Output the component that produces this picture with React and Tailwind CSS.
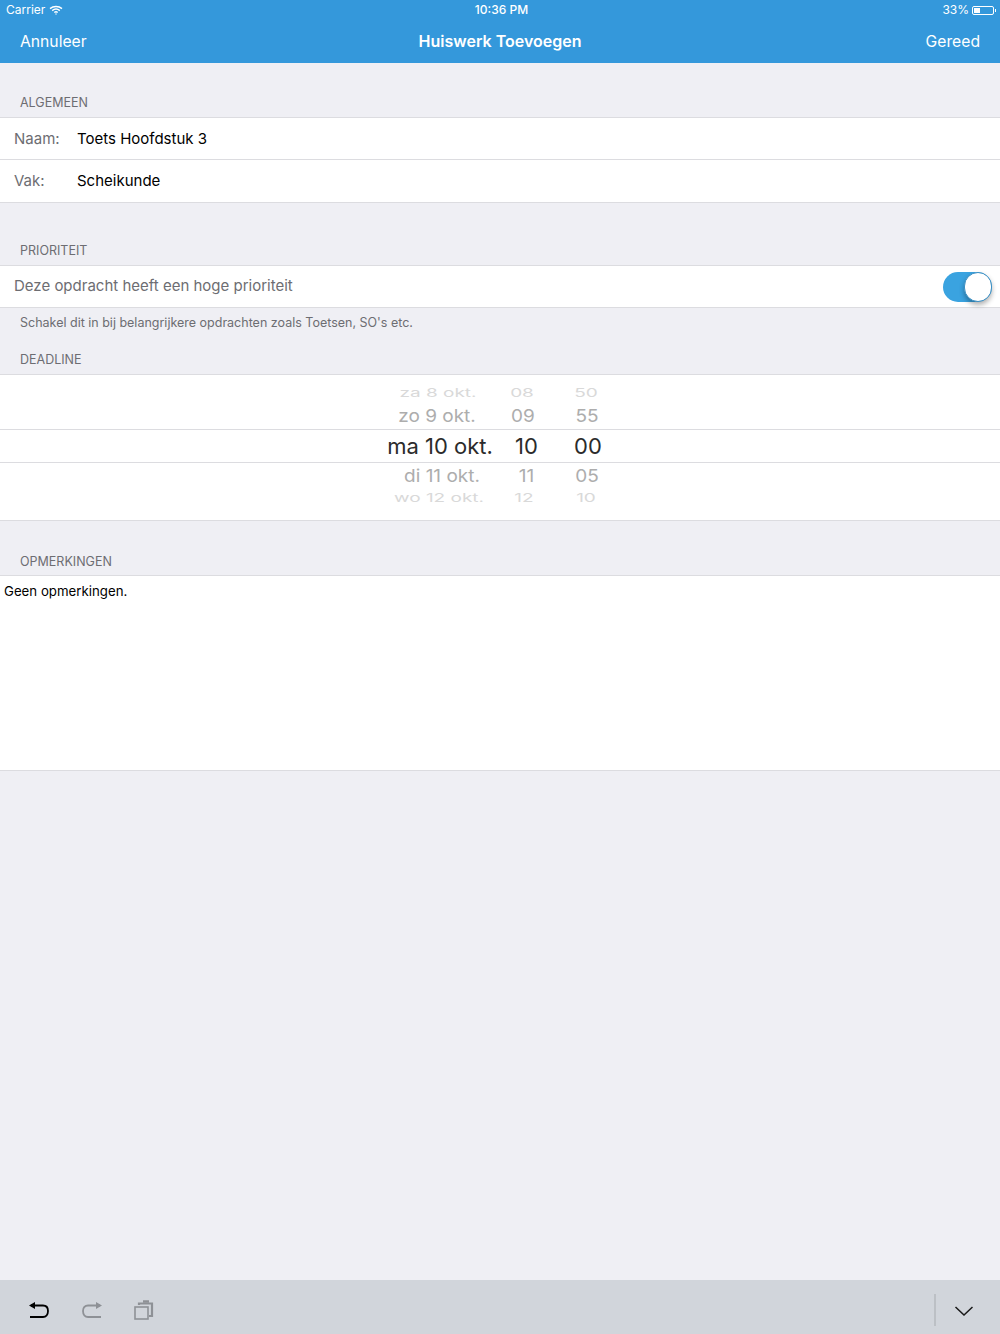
const font = { fontFamily: 'Inter, "Liberation Sans", sans-serif' }

function SectionLabel({ children, className = '' }) {
  return <div className={`px-5 text-[12.5px] leading-4 text-[#6d6d72] ${className}`}>{children}</div>
}

function FieldRow({ label, value, border }) {
  return (
    <div className={`flex h-[42px] items-center pl-3.5 text-[15px] ${border ? 'border-b border-[#dcdce0] pt-px' : ''}`}>
      <span className="w-[63px] text-[#6d6d72]">{label}</span>
      <span className="text-black">{value}</span>
    </div>
  )
}

const pickerRows = [
  {
    row: 'h-[18px] text-[19px] text-[#d9d9d9] scale-y-[0.6]',
    cells: [['za 8 okt.', 'w-[129px] pl-[15px]'], ['08', 'w-[63px] pr-[9px]'], ['50', 'w-[60px] pr-[4px]']],
  },
  {
    row: 'h-[27px] pt-[4px] text-[19px] text-[#adadad] scale-y-[0.92]',
    cells: [['zo 9 okt.', 'w-[129px] pl-[13px]'], ['09', 'w-[63px] pr-[7px]'], ['55', 'w-[60px] pr-[2px]']],
  },
  {
    row: 'h-[34px] text-[22px] text-[#2b2b2b] border-y border-[#dcdce0]',
    cells: [['ma 10 okt.', 'w-[129px] pl-[19px]'], ['10', 'w-[63px]'], ['00', 'w-[60px]']],
  },
  {
    row: 'h-[28px] pb-[2px] text-[19px] text-[#adadad] scale-y-[0.92]',
    cells: [['di 11 okt.', 'w-[129px] pl-[23px]'], ['11', 'w-[63px]'], ['05', 'w-[60px] pr-[2px]']],
  },
  {
    row: 'h-[15px] text-[19px] text-[#d9d9d9] scale-y-[0.6]',
    cells: [['wo 12 okt.', 'w-[129px] pl-[17px]'], ['12', 'w-[63px] pr-[5px]'], ['10', 'w-[60px] pr-[4px]']],
  },
]

export default function App() {
  return (
    <div style={font} className="flex h-[1334px] w-[1000px] flex-col overflow-hidden bg-[#efeff4]">
      {/* nav bar */}
      <header className="h-[63px] bg-[#3498db] text-white">
        <div className="relative flex h-5 items-center justify-between pl-1.5 pr-1 text-[12px]">
          <div className="flex items-center gap-1">
            <span>Carrier</span>
            <svg width="14" height="10" viewBox="0 0 14 10" fill="none" stroke="white" strokeWidth="1.4">
              <path d="M1 3.6C4.3.7 9.700.7 13 3.600" />
              <path d="M3.200 5.600c2.200-1.900 5.400-1.900 7.600 0" />
              <path d="M5.300 7.500c1-.8 2.400-.8 3.400 0" />
              <circle cx="7" cy="9" r=".7" fill="white" stroke="none" />
            </svg>
          </div>
          <span className="absolute left-0 right-0 pl-[3px] text-center font-medium">10:36 PM</span>
          <div className="flex items-center gap-[3px]">
            <span>33%</span>
            <div className="flex items-center">
              <div className="h-[9px] w-[22px] rounded-[2px] border border-white p-px">
                <div className="h-full w-[6px] bg-white" />
              </div>
              <div className="ml-px h-[3px] w-px bg-white" />
            </div>
          </div>
        </div>
        <div className="flex h-[43px] items-center justify-between px-5 text-[15.700px]">
          <span className="w-24">Annuleer</span>
          <span className="pb-0.5 text-[16px] font-semibold">Huiswerk Toevoegen</span>
          <span className="w-24 text-right">Gereed</span>
        </div>
      </header>

      <SectionLabel className="pt-[32px] pb-[6px]">ALGEMEEN</SectionLabel>
      <section className="h-[86px] border-y border-[#dcdce0] bg-white">
        <FieldRow label="Naam:" value="Toets Hoofdstuk 3" border />
        <FieldRow label="Vak:" value="Scheikunde" />
      </section>

      <SectionLabel className="pt-[40px] pb-[6px]">PRIORITEIT</SectionLabel>
      <section className="flex h-[43px] items-center justify-between border-y border-[#dcdce0] bg-white pl-3.5 pr-2 text-[15px] text-[#6d6d72]">
        <span>Deze opdracht heeft een hoge prioriteit</span>
        <div className="flex h-[30px] w-[49px] justify-end rounded-full bg-[#3aa3e0]">
          <div className="h-[30px] w-[28px] rounded-full border border-[#3a8fc4] bg-white shadow-[0_3px_5px_rgba(0,0,0,0.3)]" />
        </div>
      </section>
      <SectionLabel className="pt-[7px] pb-0">Schakel dit in bij belangrijkere opdrachten zoals Toetsen, SO's etc.</SectionLabel>

      <SectionLabel className="pt-[21px] pb-[6px]">DEADLINE</SectionLabel>
      <section className="h-[147px] border-y border-[#dcdce0] bg-white pt-[9px]">
        {pickerRows.map((r) => (
          <div key={r.cells[0][0]} className={`flex items-center justify-center ${r.row}`}>
            <div className="flex pr-[16px]">
              {r.cells.map(([text, cell]) => (
                <span key={text} className={`whitespace-nowrap text-center ${cell}`}>{text}</span>
              ))}
            </div>
          </div>
        ))}
      </section>

      <SectionLabel className="pt-[33px] pb-[5px]">OPMERKINGEN</SectionLabel>
      <section className="h-[196px] border-y border-[#dcdce0] bg-white px-1 pt-[5px] text-[13.250px] leading-5 text-black">
        Geen opmerkingen.
      </section>

      {/* keyboard toolbar */}
      <footer className="mt-auto flex h-[54px] items-center bg-[#d1d5db] pl-[28px] pr-[26px] pt-[6px]">
        <svg width="22" height="20" viewBox="0 0 22 20" fill="none" stroke="black" strokeWidth="1.8" className="mr-[31px]">
          <path d="M3 5.500h12c3 0 5 2 5 5.500s-2 6-5 6H2" />
          <path d="M1 5.500 7 2v7z" fill="black" stroke="none" />
        </svg>
        <svg width="22" height="20" viewBox="0 0 22 20" fill="none" stroke="#8e9196" strokeWidth="1.8" className="mr-[31px]">
          <path d="M19 5.500H7c-3 0-5 2-5 5.500s2 6 5 6h13" />
          <path d="M21 5.500 15 2v7z" fill="#8e9196" stroke="none" />
        </svg>
        <svg width="20" height="20" viewBox="0 0 20 20" fill="none" stroke="#8e9196" strokeWidth="1.600">
          <rect x="1" y="7" width="13" height="12" />
          <path d="M5 5V3.500h13V16h-3" strokeWidth="2.200" />
          <path d="M9 1.500h6" strokeWidth="2.500" />
        </svg>
        <div className="ml-auto mr-[18px] h-[32px] w-0.5 bg-[#bcc0c5]" />
        <svg width="20" height="10" viewBox="0 0 20 10" fill="none" stroke="#1a1a1a" strokeWidth="1.500" className="mt-[1px]">
          <path d="M1.500 1 10 9l8.500-8" />
        </svg>
      </footer>
    </div>
  )
}
